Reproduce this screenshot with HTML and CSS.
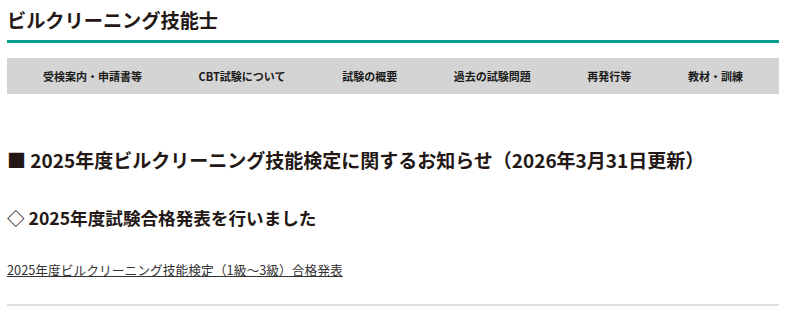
FILE: index.html
```html
<!DOCTYPE html>
<html lang="ja">
<head>
<meta charset="utf-8">
<title>ビルクリーニング技能士</title>
<link rel="stylesheet" href="styles.css">
</head>
<body>
<div class="page">
  <header class="site-header">
    <h1 class="site-title">ビルクリーニング技能士</h1>
  </header>
  <nav class="global-nav">
    <a href="#">受検案内・申請書等</a>
    <a href="#">CBT試験について</a>
    <a href="#">試験の概要</a>
    <a href="#">過去の試験問題</a>
    <a href="#">再発行等</a>
    <a href="#">教材・訓練</a>
  </nav>
  <main class="content">
    <h2 class="notice-title">■ 2025年度ビルクリーニング技能検定に関するお知らせ（2026年3月31日更新）</h2>
    <h3 class="notice-sub">◇ 2025年度試験合格発表を行いました</h3>
    <p class="notice-link"><a href="#">2025年度ビルクリーニング技能検定（1級～3級）合格発表</a></p>
    <hr class="divider">
  </main>
</div>
</body>
</html>
```
FILE: styles.css
```css
html, body {
  margin: 0;
  padding: 0;
  background: #ffffff;
}
body {
  font-family: "Noto Sans CJK JP", "Noto Sans", sans-serif;
  color: #231815;
}
.page {
  width: 772px;
  margin-left: 7px;
}
.site-header {
  padding: 6px 0 6px;
  border-bottom: 3px solid #009e8f;
}
.site-title {
  margin: 0;
  font-size: 19.2px;
  line-height: 28px;
  font-weight: 700;
  color: #231815;
}
.global-nav {
  margin-top: 15px;
  height: 36px;
  background: #d4d4d4;
  display: flex;
  justify-content: space-between;
  align-items: center;
  padding: 0 36px;
}
.global-nav a {
  font-size: 11px;
  font-weight: 700;
  color: #1a1a1a;
  text-decoration: none;
  line-height: 16px;
}
.content {
  padding-top: 52px;
}
.notice-title {
  margin: 0;
  font-size: 19px;
  line-height: 28px;
  font-weight: 700;
}
.notice-sub {
  margin: 31px 0 0;
  font-size: 17.6px;
  line-height: 26px;
  font-weight: 700;
}
.notice-link {
  margin: 29px 0 0;
  font-size: 12.75px;
  line-height: 20px;
}
.notice-link a {
  color: #333;
  text-decoration: underline;
}
.divider {
  margin: 24px 0 0;
  border: 0;
  height: 2px;
  background: #e0e0e0;
}
```
